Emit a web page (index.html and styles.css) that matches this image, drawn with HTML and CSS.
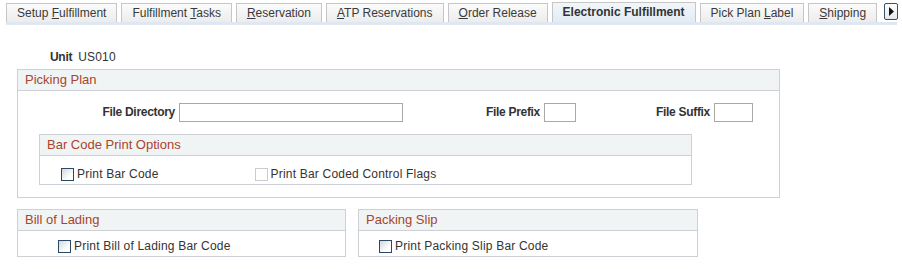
FILE: index.html
```html
<!DOCTYPE html>
<html lang="en">
<head>
  <meta charset="UTF-8">
  <title>Electronic Fulfillment</title>
  <link rel="stylesheet" href="styles.css">
</head>
<body>
  <!-- page tabs -->
  <div class="tabs">
    <span class="tab">Setup <u>F</u>ulfillment</span>
    <span class="tab">Fulfillment <u>T</u>asks</span>
    <span class="tab"><u>R</u>eservation</span>
    <span class="tab"><u>A</u>TP Reservations</span>
    <span class="tab"><u>O</u>rder Release</span>
    <span class="tab active">Electronic Fulfillment</span>
    <span class="tab">Pick Plan <u>L</u>abel</span>
    <span class="tab"><u>S</u>hipping</span>
    <span class="tab-next">
      <svg width="9" height="11" viewBox="0 0 9 11"><path d="M2 1 L7 5.5 L2 10 Z" fill="#111"/></svg>
    </span>
  </div>

  <div class="page">
    <div class="unit-row">
      <span class="lbl">Unit</span>
      <span class="val">US010</span>
    </div>

    <div class="group picking">
      <div class="group-head">Picking Plan</div>
      <div class="picking-body">
        <div class="field-row">
          <label class="lbl cell-dir">File Directory</label>
          <span class="input in-dir"></span>
          <label class="lbl cell-prefix">File Prefix</label>
          <span class="input in-prefix"></span>
          <label class="lbl cell-suffix">File Suffix</label>
          <span class="input in-suffix"></span>
        </div>

        <div class="group barcode">
          <div class="group-head">Bar Code Print Options</div>
          <div class="check-row">
            <span class="check cb-print"><span class="box"></span>Print Bar Code</span>
            <span class="check cb-flags disabled"><span class="box"></span>Print Bar Coded Control Flags</span>
          </div>
        </div>
      </div>
    </div>

    <div class="bottom-row">
      <div class="group bill">
        <div class="group-head">Bill of Lading</div>
        <div class="check-row">
          <span class="check"><span class="box"></span>Print Bill of Lading Bar Code</span>
        </div>
      </div>
      <div class="group packing">
        <div class="group-head">Packing Slip</div>
        <div class="check-row">
          <span class="check"><span class="box"></span>Print Packing Slip Bar Code</span>
        </div>
      </div>
    </div>
  </div>
</body>
</html>
```

FILE: styles.css
```css
body {
  margin: 0;
  font-family: "Liberation Sans", Arial, sans-serif;
  font-size: 12px;
  color: #333;
  background: #fff;
}
/* tabs */
.tabs {
  display: flex;
  align-items: flex-end;
  gap: 4px;
  margin: 2px 5px 0 6px;
  height: 20px;
  border-bottom: 3px solid #dfe8f2;
}
.tab {
  flex-shrink: 0;
  height: 18px;
  line-height: 18px;
  padding: 0 10px;
  border: 1px solid #c6c6c6;
  border-bottom: 0;
  background: linear-gradient(#fbfbfb, #ececec);
  color: #3a3a3a;
  white-space: nowrap;
}
.tab.active {
  height: 19px;
  background: linear-gradient(#f2f6fa, #e3ebf4);
  font-weight: bold;
  color: #333;
}
.tab-next {
  flex-shrink: 0;
  display: flex;
  align-items: center;
  justify-content: center;
  width: 12px;
  height: 15px;
  margin: 0 0 2px 3px;
  border: 1px solid #3d4f66;
  border-radius: 2px;
  background: linear-gradient(#fff, #e4e8ee);
}
/* page content */
.page {
  padding-left: 17px;
}
.lbl {
  font-weight: bold;
  letter-spacing: -0.3px;
}
.val {
  letter-spacing: 0.2px;
}
.unit-row {
  display: flex;
  gap: 6px;
  margin: 25px 0 0 33px;
  line-height: 14px;
}
.group {
  border: 1px solid #cdd1d5;
  box-sizing: border-box;
}
.group-head {
  height: 20px;
  line-height: 20px;
  padding-left: 7px;
  font-size: 13px;
  color: #a8452c;
  background: #f1f4f4;
  border-bottom: 1px solid #cdd1d5;
}
.picking {
  width: 763px;
  margin-top: 5px;
}
.picking-body {
  padding: 12px 0 12px 21px;
}
.field-row {
  display: flex;
  height: 19px;
  line-height: 19px;
  margin-left: -21px;
}
.field-row .lbl {
  text-align: right;
  padding-right: 4px;
  box-sizing: border-box;
}
.cell-dir { width: 161px; }
.cell-prefix { width: 141px; }
.cell-suffix { width: 138px; }
.input {
  display: block;
  height: 19px;
  box-sizing: border-box;
  border: 1px solid #a9a9a9;
  background: #fff;
}
.in-dir { width: 224px; }
.in-prefix { width: 32px; }
.in-suffix { width: 39px; }
.barcode {
  width: 653px;
  margin-top: 12px;
}
.check-row {
  display: flex;
  align-items: center;
  height: 14px;
  padding: 11px 0 3px;
}
.check {
  display: flex;
  align-items: center;
  gap: 3px;
  white-space: nowrap;
  letter-spacing: 0.2px;
}
.box {
  width: 11px;
  height: 11px;
  border: 1px solid #2b4867;
  background: linear-gradient(135deg, #d4d6d8, #fff 70%);
}
.check.disabled .box {
  border-color: #cbcbcb;
  background: #fff;
}
.cb-print { margin-left: 21px; }
.cb-flags { margin-left: 96px; }
.bottom-row {
  display: flex;
  gap: 12px;
  margin-top: 11px;
}
.bill { width: 329px; }
.packing { width: 340px; }
.bill .check-row,
.packing .check-row {
  padding: 8px 0 3px;
}
.bill .check { margin-left: 40px; }
.packing .check { margin-left: 20px; }
```
